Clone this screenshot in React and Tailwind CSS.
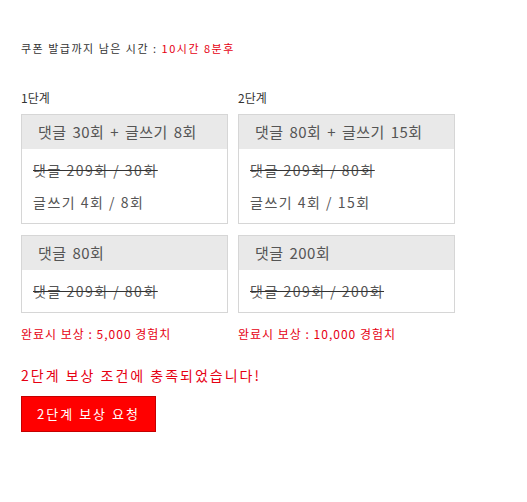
const font = { fontFamily: '"Noto Sans CJK KR", "Noto Sans", sans-serif' };

function MissionBox({ title, lines }) {
  return (
    <div className="border border-[#d6d6d6] bg-white">
      <div className="h-[34px] bg-[#e9e9e9] pl-[16px] flex items-center text-[15px] tracking-[0.5px] [word-spacing:2px] text-[#555]">
        {title}
      </div>
      <div className="px-[11px] pt-[5px] pb-[5px]">
        {lines.map((l, i) => (
          <div key={i} className={`h-[32px] flex items-center text-[14px] tracking-[1.5px] text-[#555] ${l.done ? "line-through decoration-[#333]" : ""}`}>
            {l.text}
          </div>
        ))}
      </div>
    </div>
  );
}

export default function App() {
  return (
    <div className="w-[527px] h-[502px] bg-white pl-[21px] pt-[40px]" style={font}>
      <p className="text-[11px] leading-[16px] tracking-[1.5px] text-[#333]">
        쿠폰 발급까지 남은 시간 : <span className="text-[#e60012]">10시간 8분후</span>
      </p>

      <div className="mt-[34px] grid grid-cols-[207px_217px] gap-x-[10px]">
        <div>
          <p className="text-[12px] leading-[16px] text-[#333] mb-[8px]">1단계</p>
          <MissionBox title="댓글 30회 + 글쓰기 8회" lines={[{ text: "댓글 209회 / 30회", done: true }, { text: "글쓰기 4회 / 8회" }]} />
          <div className="mt-[11px]">
            <MissionBox title="댓글 80회" lines={[{ text: "댓글 209회 / 80회", done: true }]} />
          </div>
          <p className="mt-[13px] text-[12px] leading-[16px] tracking-[1px] text-[#e60012]">완료시 보상 : 5,000 경험치</p>
        </div>
        <div>
          <p className="text-[12px] leading-[16px] text-[#333] mb-[8px]">2단계</p>
          <MissionBox title="댓글 80회 + 글쓰기 15회" lines={[{ text: "댓글 209회 / 80회", done: true }, { text: "글쓰기 4회 / 15회" }]} />
          <div className="mt-[11px]">
            <MissionBox title="댓글 200회" lines={[{ text: "댓글 209회 / 200회", done: true }]} />
          </div>
          <p className="mt-[13px] text-[12px] leading-[16px] tracking-[1px] text-[#e60012]">완료시 보상 : 10,000 경험치</p>
        </div>
      </div>

      <p className="mt-[24px] text-[14px] leading-[18px] text-[#e60012] tracking-[2px]">2단계 보상 조건에 충족되었습니다!</p>
      <button className="mt-[12px] w-[135px] h-[36px] bg-[#ff0000] border border-[#c40000] text-white text-[13px] tracking-[2px]">
        2단계 보상 요청
      </button>
    </div>
  );
}
